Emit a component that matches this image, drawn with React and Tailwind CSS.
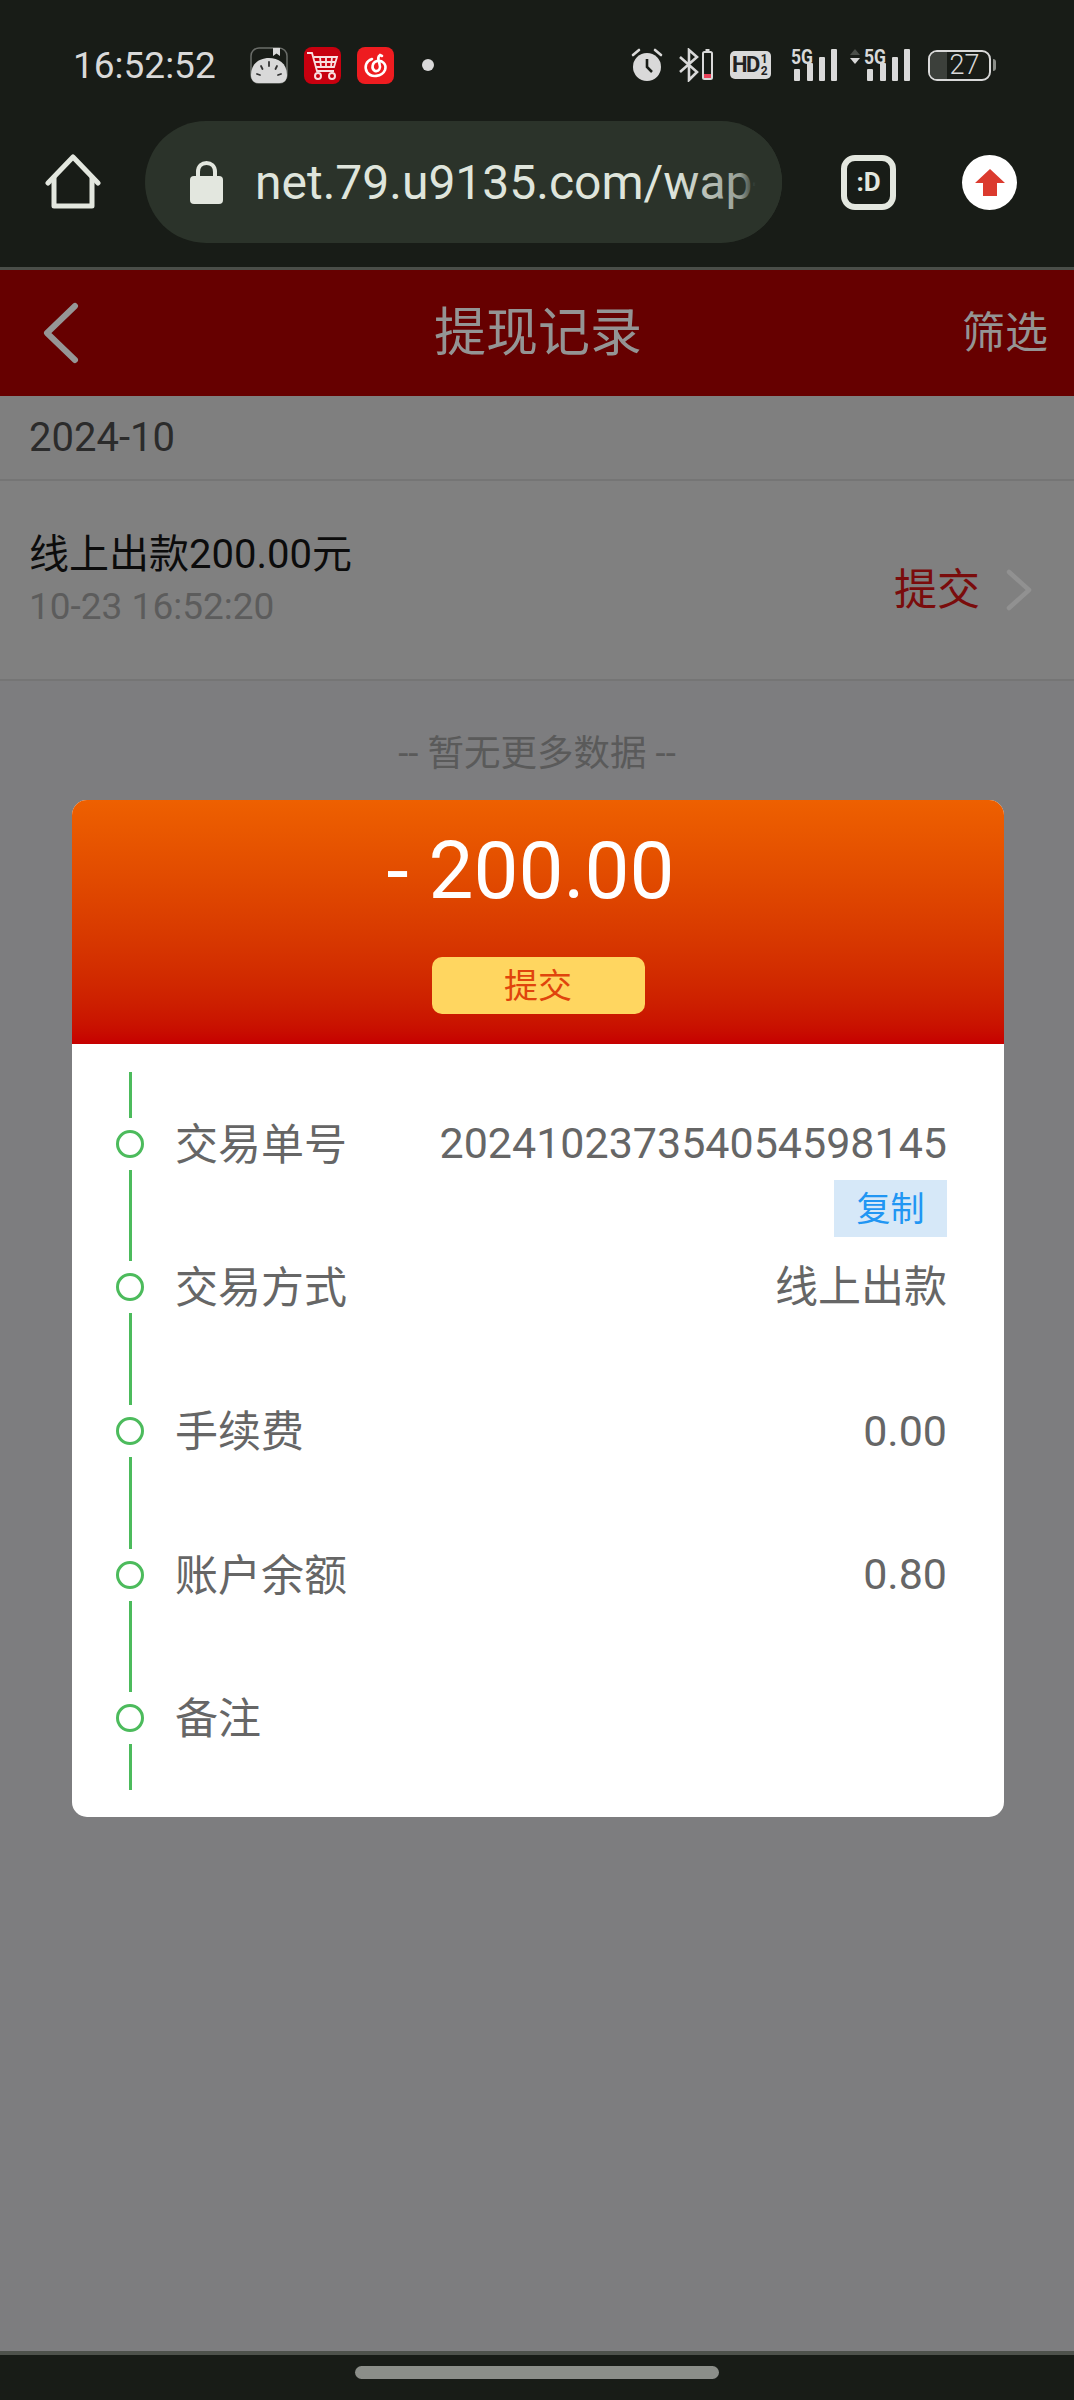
const rows = [
  { label: '交易单号', value: '20241023735405' + '4598145', copy: true },
  { label: '交易方式', value: '线上出款' },
  { label: '手续费', value: '0.00' },
  { label: '账户余额', value: '0.80' },
  { label: '备注', value: '' },
];

function Signal({ arrows }) {
  return (
    <svg className="overflow-visible" width={arrows ? 60 : 46} height="34" viewBox={arrows ? '0 0 60 34' : '0 0 46 34'} fill="#d9d9d9">
      <g transform={arrows ? 'translate(14 0)' : undefined}>
        <text x="0" y="16" fontSize="20" fontWeight="700" fontFamily="Roboto, sans-serif" textLength="22" lengthAdjust="spacingAndGlyphs">5G</text>
        <rect x="3" y="21" width="6" height="12" rx="1" />
        <rect x="16" y="15" width="6" height="18" rx="1" />
        <rect x="28" y="9" width="6" height="24" rx="1" />
        <rect x="40" y="1" width="6" height="32" rx="1" />
      </g>
      {arrows && (
        <>
          <path d="M0 7 L5 1 L10 7 Z" fill="#4a4e49" />
          <path d="M0 10 L10 10 L5 16 Z" />
        </>
      )}
    </svg>
  );
}

function StatusBar() {
  return (
    <div className="flex h-[38px] items-center pl-[73px] text-[#d9d9d9]">
      <span className="w-[177px] text-[37px] leading-none">16:52:52</span>
      <svg width="38" height="37" viewBox="0 0 38 37">
        <rect x="1" y="1" width="36" height="35" rx="8" fill="none" stroke="#6a6d69" strokeWidth="1.5" />
        <path d="M1 28 C1 16 10 11 19 11 C28 11 37 16 37 28 C37 33 34 36 30 36 H8 C4 36 1 33 1 28 Z" fill="#d9d9d9" />
        <path d="M23 1 H30 V9 L26.5 6.5 L23 9 Z" fill="#d9d9d9" />
        <path d="M19 15 V19 M11 19 L12.5 22 M27 19 L25.5 22 M7 27 L10 28 M31 27 L28 28" stroke="#333" strokeWidth="1.8" strokeLinecap="round" />
      </svg>
      <svg className="ml-[16px]" width="37" height="37" viewBox="0 0 37 37">
        <rect width="37" height="37" rx="8" fill="#c8000f" />
        <path d="M3 6 H8 L13 24 H30 M10 10 H33 L30 20 H12 M16 10 L17 20 M22 10 V20 M28 10 L27 20 M11 15 H32" fill="none" stroke="#f8dfe0" strokeWidth="1.8" />
        <circle cx="14" cy="29" r="3" fill="none" stroke="#f8dfe0" strokeWidth="2" />
        <circle cx="28" cy="29" r="3" fill="none" stroke="#f8dfe0" strokeWidth="2" />
      </svg>
      <svg className="ml-[16px]" width="37" height="37" viewBox="0 0 37 37">
        <rect width="37" height="37" rx="8" fill="#ee1c20" />
        <path d="M15 12 C9 14 7 20 10 25 C14 31 25 30 28 23 C30 17 25 13 20 14 C15 15 14 22 18 24 C22 25 24 21 22.5 17 C21.5 13 20 10 23 8 L25 9" fill="none" stroke="#fff" strokeWidth="2.6" strokeLinecap="round" />
      </svg>
      <span className="ml-[28px] size-[12px] rounded-full bg-[#d9d9d9]" />

      <div className="ml-[196px] flex items-center">
        <svg width="34" height="34" viewBox="0 0 34 34">
          <circle cx="17" cy="19" r="14" fill="#d9d9d9" />
          <path d="M17 11 V19 L22 24" fill="none" stroke="#181c17" strokeWidth="2.6" />
          <path d="M3 7 L9 2 M31 7 L25 2" stroke="#d9d9d9" strokeWidth="2.6" strokeLinecap="round" />
        </svg>
        <svg className="ml-[14px]" width="36" height="34" viewBox="0 0 36 34">
          <path d="M2 9 L19 24 L11 32 V2 L19 9 L2 24" fill="none" stroke="#d9d9d9" strokeWidth="2.6" />
          <rect x="25" y="4" width="9" height="27" rx="1.5" fill="none" stroke="#d9d9d9" strokeWidth="2" />
          <rect x="27.5" y="1" width="4" height="3" fill="#d9d9d9" />
          <rect x="26" y="26" width="7" height="4" fill="#e8415a" />
        </svg>
        <div className="ml-[16px] flex h-[28px] w-[41px] items-center rounded-[5px] bg-[#d9d9d9] pl-[2px] text-[#222]">
          <span className="text-[22px] leading-none font-bold tracking-[-1.5px]">HD</span>
          <span className="ml-[2px] flex flex-col text-[12px] leading-[12px] font-bold">
            <span>1</span>
            <span>2</span>
          </span>
        </div>
        <div className="ml-[20px]">
          <Signal />
        </div>
        <div className="ml-[13px]">
          <Signal arrows />
        </div>
        <div className="ml-[18px] flex items-center">
          <div className="relative flex h-[31px] w-[63px] items-center justify-center overflow-hidden rounded-[9px] border-2 border-[#d9d9d9] pl-[10px] text-[27px] leading-none font-light">
            <span className="absolute top-0 bottom-0 left-0 w-[17px] bg-[#3c403b]" />
            <span className="relative">27</span>
          </div>
          <span className="ml-[2px] h-[12px] w-[3px] rounded-r bg-[#8b8e89]" />
        </div>
      </div>
    </div>
  );
}

function BrowserBar() {
  return (
    <div className="mt-[37px] flex items-center pl-[45px]">
      <svg width="56" height="56" viewBox="0 0 56 56" fill="none" stroke="#e3e7df" strokeWidth="5" strokeLinejoin="round" strokeLinecap="round">
        <path d="M3 29 L28 3 L53 29" />
        <path d="M9 24 V52 H47 V24" />
      </svg>
      <div className="relative ml-[44px] flex h-[122px] w-[637px] items-center overflow-hidden rounded-full bg-[#2b332a] pl-[45px]">
        <svg className="shrink-0" width="33" height="44" viewBox="0 0 33 44">
          <path d="M8 20 V12 C8 6 12 3 16.5 3 C21 3 25 6 25 12 V20" fill="none" stroke="#e3e7df" strokeWidth="4" />
          <rect y="16" width="33" height="28" rx="4" fill="#e3e7df" />
        </svg>
        <span className="mt-[2px] ml-[32px] text-[48px] leading-none whitespace-nowrap text-[#dfe5dc]">net.79.u9135.com/wap-</span>
        <div className="absolute top-0 right-0 bottom-0 w-[110px] bg-gradient-to-r from-[#2b332a00] via-[#2b332a66] via-62% to-[#2b332a] to-76%" />
      </div>
      <div className="ml-[59px] flex size-[55px] items-center justify-center rounded-[14px] border-[6px] border-[#e3e7df] text-[26px] leading-none font-bold text-[#e3e7df]">
        :D
      </div>
      <div className="ml-[66px] flex size-[55px] items-center justify-center rounded-full bg-white">
        <svg width="30" height="28" viewBox="0 0 30 28">
          <path d="M15 1 L30 15 H22 V28 H8 V15 H0 Z" fill="#db3a2e" />
        </svg>
      </div>
    </div>
  );
}

function DetailRow({ row }) {
  return (
    <div className="flex h-[143.6px] items-center">
      <div className="flex h-full w-[28px] flex-col items-center">
        <span className="w-[3px] flex-1 bg-[#4cbb5c]" />
        <span className="my-[12px] size-[28px] rounded-full border-[3px] border-[#4cbb5c]" />
        <span className="w-[3px] flex-1 bg-[#4cbb5c]" />
      </div>
      <span className="ml-[31px] pt-[3px] text-[43px] leading-none text-[#666]">{row.label}</span>
      <div className="relative ml-auto text-[43px] leading-none text-[#666]">
        {row.value}
        {row.copy && (
          <span className="absolute top-[58px] right-0 flex h-[57px] w-[113px] items-center justify-center bg-[#d6e8f8] text-[34px] leading-none text-[#2196f3]">
            复制
          </span>
        )}
      </div>
    </div>
  );
}

export default function App() {
  return (
    <div className="flex h-screen flex-col bg-[#181c17] font-['Roboto','Noto_Sans_CJK_SC',sans-serif]">
      <div className="h-[267px] pt-[46px]">
        <StatusBar />
        <BrowserBar />
      </div>
      <div className="h-[3px] bg-[#4a4e49]" />

      <div className="relative flex-1 bg-[#7d7d7f]">
        <div className="grid h-[126px] grid-cols-[1fr_auto_1fr] items-center bg-[#660000] text-[#949494]">
          <svg className="ml-[42px]" width="38" height="62" viewBox="0 0 38 62" fill="none" stroke="#969696" strokeWidth="6" strokeLinecap="round" strokeLinejoin="round">
            <path d="M33 4 L5 31 L33 58" />
          </svg>
          <span className="pt-[2px] pl-[2px] text-[52px] leading-none">提现记录</span>
          <span className="mr-[26px] justify-self-end text-[43px] leading-none">筛选</span>
        </div>
        <div className="flex h-[85px] items-center border-b-2 border-[#757575] bg-[#7f7f7f] pl-[29px] text-[40px] leading-none text-[#2b2b2b]">
          2024-10
        </div>
        <div className="flex h-[200px] items-center justify-between border-b-2 border-[#757575] bg-[#808080] pr-[42px] pl-[29px]">
          <div>
            <div className="text-[40px] leading-none text-[#0c0c0c]">线上出款200.00元</div>
            <div className="mt-[13px] text-[37px] leading-none text-[#5c5c5c]">10-23 16:52:20</div>
          </div>
          <div className="mt-[20px] flex items-center">
            <span className="text-[43px] leading-none text-[#7a0c0c]">提交</span>
            <svg className="ml-[26px]" width="26" height="42" viewBox="0 0 26 42" fill="none" stroke="#919191" strokeWidth="4.5" strokeLinecap="round" strokeLinejoin="round">
              <path d="M3 3 L23 21 L3 39" />
            </svg>
          </div>
        </div>
        <div className="mt-[55px] text-center text-[36.5px] leading-none text-[#5a5a5a]">-- 暂无更多数据 --</div>

        {/* popup sits over the list */}
        <div className="absolute inset-0 flex items-center pb-[4px] pl-[72px]">
          <div className="w-[932px] overflow-hidden rounded-[15px] bg-white">
            <div className="flex h-[244px] flex-col items-center bg-gradient-to-b from-[#ee6000] to-[#c60000] pt-[31px]">
              <div className="mr-[15px] text-[80px] leading-none text-white">- 200.00</div>
              <div className="mt-[46px] flex h-[57px] w-[213px] items-center justify-center rounded-[10px] bg-[#ffd660] text-[34px] leading-none text-[#e0440c]">
                提交
              </div>
            </div>
            <div className="pt-[28px] pr-[57px] pb-[27px] pl-[44px]">
              {rows.map((row) => (
                <DetailRow key={row.label} row={row} />
              ))}
            </div>
          </div>
        </div>
      </div>

      <div className="h-[4px] bg-[#4e524c]" />
      <div className="flex h-[45px] justify-center pt-[11px]">
        <span className="h-[13px] w-[364px] rounded-full bg-[#8b8e89]" />
      </div>
    </div>
  );
}
